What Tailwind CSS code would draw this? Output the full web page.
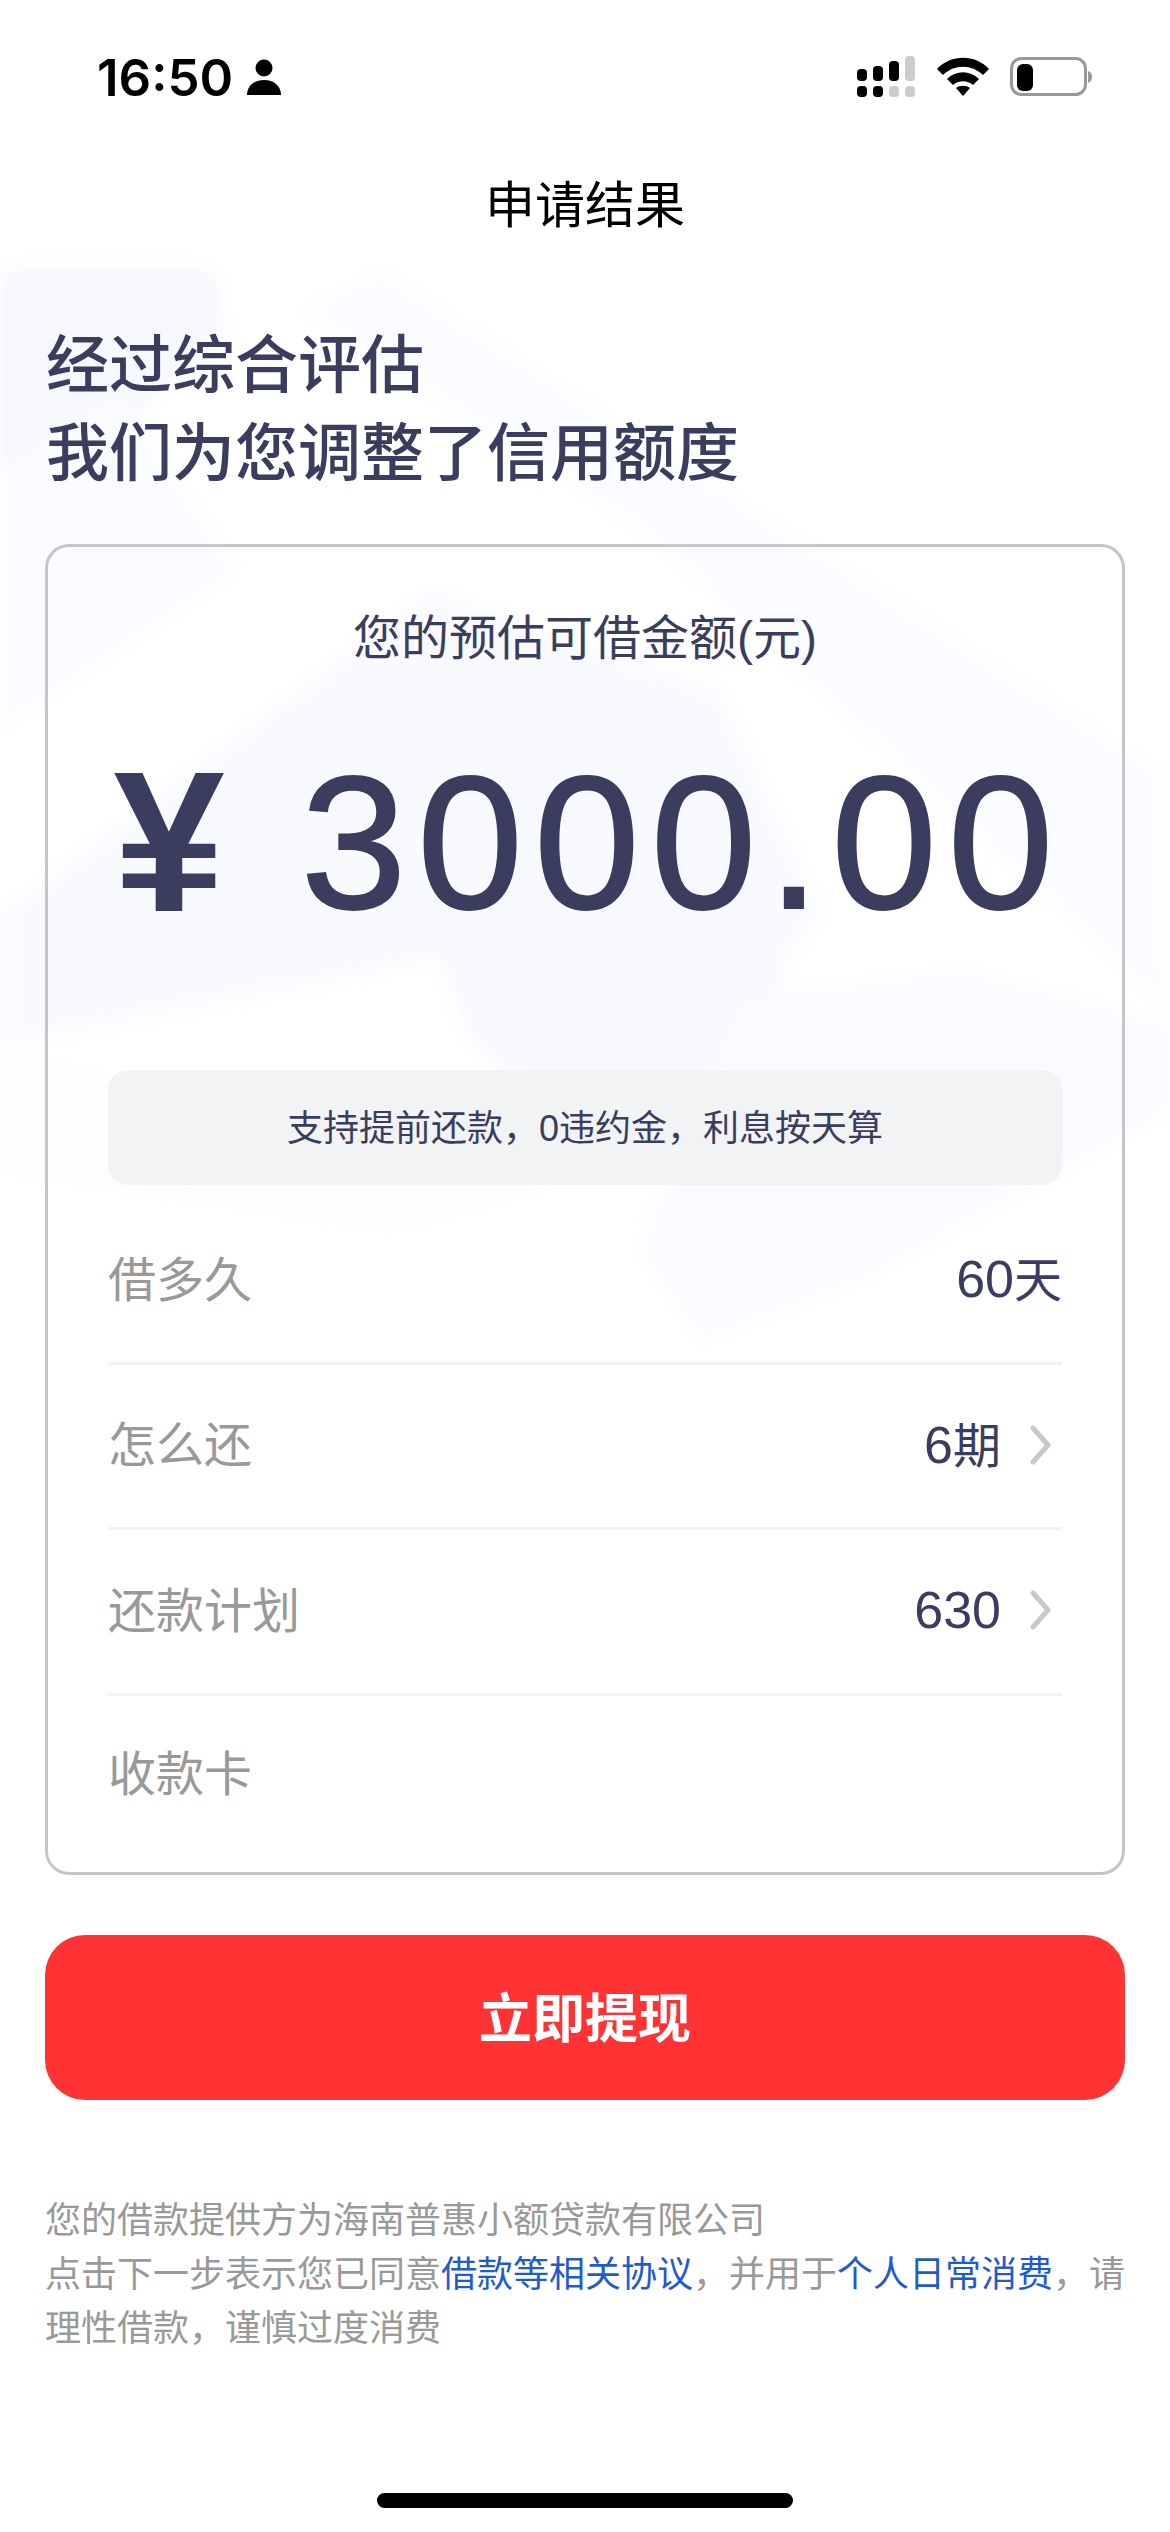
<!DOCTYPE html>
<html lang="zh-CN">
<head>
    <meta charset="UTF-8">
    <meta name="viewport" content="width=device-width, initial-scale=1.0">
    <title>申请结果</title>
    <script src="https://cdn.jsdelivr.net/npm/@tailwindcss/browser@4"></script>
</head>
<body class="bg-white font-['Liberation_Sans','Noto_Sans_CJK_SC',sans-serif] text-[#3b3d5f]">
    <div class="relative w-[1170px] h-[2532px] overflow-hidden bg-white">

        <!-- Faint watermark behind the card -->
        <svg class="absolute left-0 top-[270px] blur-[8px]" width="1170" height="1100" viewBox="0 0 1170 1100">
            <path d="M-20 0H215L225 60L60 220L-20 290Z" fill="#f7f8fd"/>
            <path d="M0 200L120 120L240 300L0 460Z" fill="#fbfcff"/>
            <path d="M380 0L1190 520V760L640 260L300 40Z" fill="#fbfcff"/>
            <path d="M-20 660L430 320L720 420L820 640L720 800L480 790L440 690L-20 780Z" fill="#f9fafe"/>
            <path d="M480 500C620 470 760 560 780 700C790 800 640 860 520 810C430 770 400 540 480 500Z" fill="#f7f9fe"/>
            <path d="M740 730L960 700L1190 760V830L860 1010L700 1070L640 980Z" fill="#fafbff"/>
            <path d="M0 780L200 830L420 800L600 900L400 960L0 900Z" fill="#fcfdff"/>
        </svg>

        <div class="relative flex flex-col">
            <!-- Status bar -->
            <div class="flex h-[154px] items-center justify-between pl-[97px] pr-[78px]">
                <div class="flex items-center gap-[13px] text-black">
                    <span class="font-['Inter'] text-[51px] leading-none font-semibold">16:50</span>
                    <svg width="36" height="36" viewBox="0 0 36 36" fill="#000">
                        <circle cx="18" cy="9" r="8.5"/>
                        <path d="M1 36C1 27 8 21 18 21S35 27 35 36Z"/>
                    </svg>
                </div>
                <div class="flex items-center gap-[21px]">
                    <svg width="60" height="42" viewBox="0 0 60 42">
                        <rect x="1" y="13" width="10" height="12" rx="4" fill="#000"/>
                        <rect x="17" y="10" width="10" height="15" rx="4" fill="#000"/>
                        <rect x="33" y="5" width="10" height="20" rx="4" fill="#000"/>
                        <rect x="49" y="0" width="10" height="25" rx="4" fill="#ccc"/>
                        <rect x="1" y="30" width="10" height="11" rx="4" fill="#000"/>
                        <rect x="17" y="30" width="10" height="11" rx="4" fill="#000"/>
                        <rect x="33" y="30" width="10" height="11" rx="4" fill="#ccc"/>
                        <rect x="49" y="30" width="10" height="11" rx="4" fill="#ccc"/>
                    </svg>
                    <svg width="52" height="40" viewBox="0 0 52 40" fill="#000">
                        <path d="M0 12C14 -3 38 -3 52 12L46 18C35 7 17 7 6 18Z"/>
                        <path d="M10 22C19 13 33 13 42 22L36 28C30 23 22 23 16 28Z"/>
                        <path d="M19 31C23 28 29 28 33 31L26 39Z"/>
                    </svg>
                    <svg width="82" height="40" viewBox="0 0 82 40">
                        <rect x="1.5" y="1.5" width="74" height="36" rx="10" fill="none" stroke="#999" stroke-width="3"/>
                        <rect x="7" y="7" width="16" height="27" rx="6" fill="#000"/>
                        <path d="M78 14C81 15 82 17 82 20S81 25 78 26Z" fill="#999"/>
                    </svg>
                </div>
            </div>

            <!-- Title -->
            <div class="flex h-[102px] items-center justify-center pt-[3px] text-[50px] text-black">申请结果</div>

            <!-- Heading -->
            <div class="mt-[65px] px-[46px] text-[63px] leading-[88px] font-medium">
                <div>经过综合评估</div>
                <div>我们为您调整了信用额度</div>
            </div>

            <!-- Quota card -->
            <div class="mx-[45px] mt-[47px] h-[1331px] rounded-[24px] border-[3px] border-[#c4c5c7]">
                <div class="mt-[62px] text-center text-[48px] leading-[60px]">您的预估可借金额(元)</div>
                <div class="mt-[53px] flex h-[240px] items-center justify-center gap-[76px] pl-[8px] text-[190px] leading-none">
                    <span class="text-[200px] font-bold">¥</span>
                    <span class="tracking-[11px] [-webkit-text-stroke:2px_#3b3d5f]">3000.00</span>
                </div>
                <div class="mx-[60px] mt-[108px] flex h-[115px] items-center justify-center rounded-[20px] bg-[#f2f3f5] pt-[2px] text-[36px]">支持提前还款，0违约金，利息按天算</div>

                <div class="mx-[60px] mt-[14px] text-[48px]">
                    <div class="flex h-[166px] items-center justify-between border-b-[3px] border-[#f1f2f3]">
                        <span class="text-[#999]">借多久</span>
                        <span class="pb-[3px] text-[52px]">60<span class="text-[48px]">天</span></span>
                    </div>
                    <div class="flex h-[165px] items-center justify-between border-b-[3px] border-[#f1f2f3]">
                        <span class="text-[#999]">怎么还</span>
                        <span class="flex items-center gap-[29px] pr-[10px] pb-[3px]">
                            <span class="text-[52px]">6<span class="text-[48px]">期</span></span>
                            <svg width="22" height="40" viewBox="0 0 22 40" fill="none" stroke="#c8c8c8" stroke-width="5" stroke-linecap="round" stroke-linejoin="round"><path d="M3 3L18 20L3 37"/></svg>
                        </span>
                    </div>
                    <div class="flex h-[166px] items-center justify-between border-b-[3px] border-[#f1f2f3]">
                        <span class="text-[#999]">还款计划</span>
                        <span class="flex items-center gap-[29px] pr-[10px] pb-[3px]">
                            <span class="text-[52px]">630</span>
                            <svg width="22" height="40" viewBox="0 0 22 40" fill="none" stroke="#c8c8c8" stroke-width="5" stroke-linecap="round" stroke-linejoin="round"><path d="M3 3L18 20L3 37"/></svg>
                        </span>
                    </div>
                    <div class="flex h-[158px] items-center">
                        <span class="text-[#999]">收款卡</span>
                    </div>
                </div>
            </div>

            <!-- Withdraw button -->
            <button class="mx-[45px] mt-[60px] flex h-[165px] items-center justify-center rounded-[40px] bg-[#ff3333] pt-[4px] text-[53px] font-semibold text-white">立即提现</button>

            <!-- Legal copy -->
            <div class="mx-[45px] mt-[94px] text-[36px] leading-[54px] whitespace-nowrap text-[#999]">
                <div>您的借款提供方为海南普惠小额贷款有限公司</div>
                <div>点击下一步表示您已同意<span class="text-[#1f5ad0]">借款等相关协议</span>，并用于<span class="text-[#1f5ad0]">个人日常消费</span>，请</div>
                <div>理性借款，谨慎过度消费</div>
            </div>

            <!-- Home indicator -->
            <div class="mx-auto mt-[137px] h-[15px] w-[416px] rounded-full bg-black"></div>
        </div>
    </div>
</body>
</html>
